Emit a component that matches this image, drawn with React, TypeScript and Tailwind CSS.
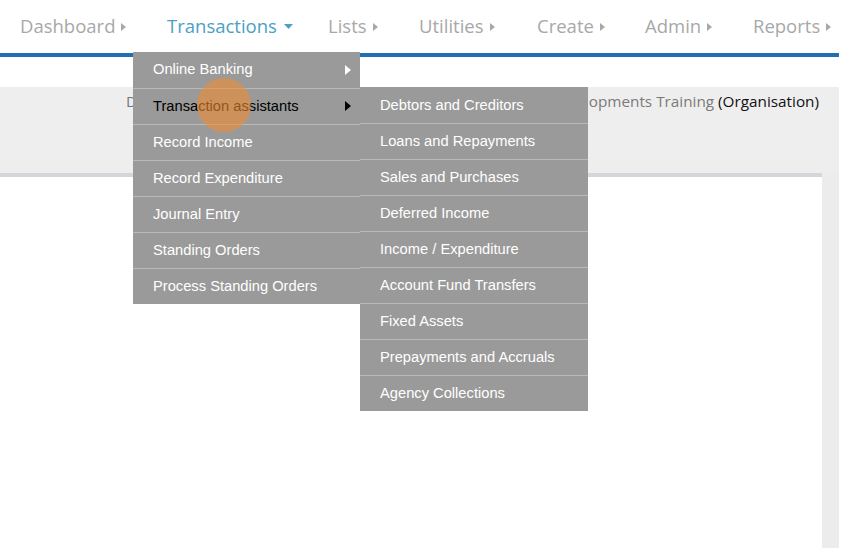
import React from 'react'

const navItems = [
  { label: 'Dashboard', w: 'w-[147px]' },
  { label: 'Transactions', w: 'w-[161px]', active: true },
  { label: 'Lists', w: 'w-[91px]' },
  { label: 'Utilities', w: 'w-[118px]' },
  { label: 'Create', w: 'w-[108px]' },
  { label: 'Admin', w: 'w-[108px]' },
  { label: 'Reports', w: 'w-[90px]' },
]

const mainMenu = [
  { label: 'Online Banking', sub: true },
  { label: 'Transaction assistants', sub: true, hover: true },
  { label: 'Record Income' },
  { label: 'Record Expenditure' },
  { label: 'Journal Entry' },
  { label: 'Standing Orders' },
  { label: 'Process Standing Orders' },
]

const subMenu = [
  'Debtors and Creditors',
  'Loans and Repayments',
  'Sales and Purchases',
  'Deferred Income',
  'Income / Expenditure',
  'Account Fund Transfers',
  'Fixed Assets',
  'Prepayments and Accruals',
  'Agency Collections',
]

function Caret({ down, color }: { down?: boolean; color: string }) {
  // little triangle after each nav label
  return down ? (
    <svg width="9" height="6" viewBox="0 0 9 6" className="ml-[7px] mt-[2px]">
      <path d="M0 0h9L4.5 5z" fill={color} />
    </svg>
  ) : (
    <svg width="5" height="8" viewBox="0 0 5 8" className="ml-[6px] mt-[3px]">
      <path d="M0 0l5 4-5 4z" fill={color} />
    </svg>
  )
}

export default function App() {
  return (
    <div className="relative w-[860px] h-[548px] overflow-hidden bg-white font-['Open_Sans',sans-serif]">
      {/* top nav */}
      <div className="flex h-[53px] items-center pl-[20px] pb-[2px] text-[18.5px]">
        {navItems.map((item) => (
          <div
            key={item.label}
            className={`flex shrink-0 items-center ${item.w} ${item.active ? 'text-[#4ba0c3]' : 'text-[#a8a8a8]'}`}
          >
            <span>{item.label}</span>
            <Caret down={item.active} color={item.active ? '#4ba0c3' : '#a8a8a8'} />
          </div>
        ))}
      </div>
      <div className="w-[839px] h-[4px] bg-[#1f6fb5]" />

      <div className="h-[30px]" />

      {/* breadcrumb / org panel */}
      <div className="w-[839px] bg-[#efeeef] pt-[3px]">
        <div className="flex h-[83px] items-start justify-between pl-[126px] pr-[20px] text-[15.3px]">
          <span className="text-[#777]">Dashboard</span>
          <span className="text-[#7a7a7a]">
            Developments Training <span className="text-[#111]">(Organisation)</span>
          </span>
        </div>
        <div className="flex">
          <div className="w-[822px]">
            <div className="h-[4px] bg-[#d6d5d9]" />
            <div className="h-[371px] bg-white" />
          </div>
          <div className="flex-1 bg-[#ececed]" />
        </div>
      </div>

      {/* dropdown menu */}
      <div className="absolute left-[133px] top-[52px] w-[227px] bg-[#9a9a9a] font-['Liberation_Sans',Arial,sans-serif] text-[14.7px]">
        {mainMenu.map((m, i) => (
          <div
            key={m.label}
            className={`flex h-[36px] items-center justify-between pl-[20px] pr-[9px] pb-[1px] ${i > 0 ? 'border-t border-[#b9b9b9]' : ''} ${m.hover ? 'text-black' : 'text-white'}`}
          >
            <span>{m.label}</span>
            {m.sub && (
              <svg width="6" height="10" viewBox="0 0 6 10">
                <path d="M0 0l6 5-6 5z" fill={m.hover ? '#000' : '#fff'} />
              </svg>
            )}
          </div>
        ))}
      </div>

      {/* sub menu */}
      <div className="absolute left-[360px] top-[87px] w-[228px] bg-[#9a9a9a] font-['Liberation_Sans',Arial,sans-serif] text-[14.7px] text-white">
        {subMenu.map((s, i) => (
          <div
            key={s}
            className={`flex h-[36px] items-center pl-[20px] ${i > 0 ? 'border-t border-[#b9b9b9]' : ''}`}
          >
            {s}
          </div>
        ))}
      </div>

      {/* cursor highlight */}
      <div className="absolute left-[197px] top-[78px] h-[54px] w-[54px] rounded-full bg-[rgba(240,140,50,0.6)]" />
    </div>
  )
}
